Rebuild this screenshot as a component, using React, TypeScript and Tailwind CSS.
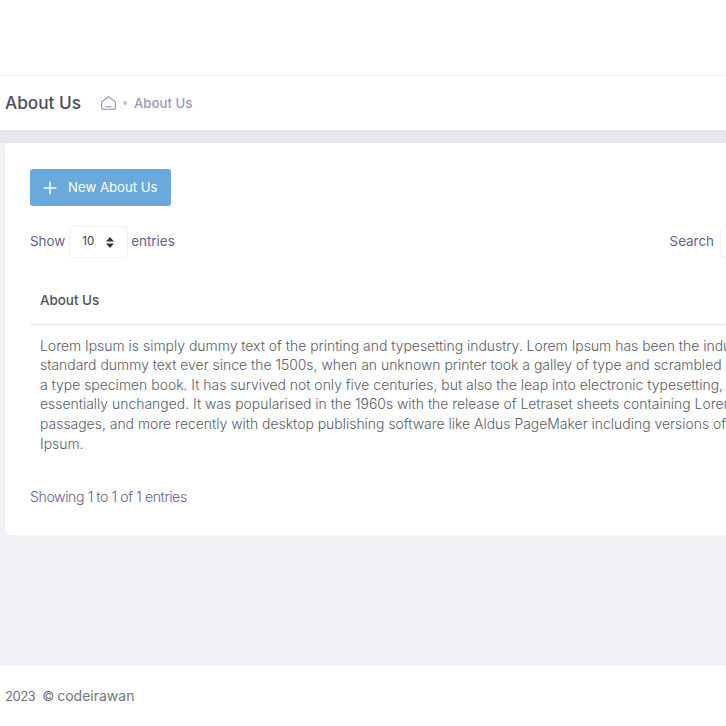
import { Plus } from "lucide-react";

const font = "font-['Inter','Noto_Sans',sans-serif]";

const loremLines = [
  "Lorem Ipsum is simply dummy text of the printing and typesetting industry. Lorem Ipsum has been the industry's",
  "standard dummy text ever since the 1500s, when an unknown printer took a galley of type and scrambled it to make",
  "a type specimen book. It has survived not only five centuries, but also the leap into electronic typesetting, remaining",
  "essentially unchanged. It was popularised in the 1960s with the release of Letraset sheets containing Lorem Ipsum",
  "passages, and more recently with desktop publishing software like Aldus PageMaker including versions of Lorem",
  "Ipsum.",
];

function HomeIcon() {
  return (
    <svg width="15" height="14" viewBox="0 0 15 14" fill="none" stroke="#8f90a9" strokeWidth="1.1" aria-hidden>
      <path d="M.7 5.6 7.5.8l6.8 4.8v6.8a.9.9 0 0 1-.9.9H1.6a.9.9 0 0 1-.9-.9z" strokeLinejoin="round" />
      <path d="M5 10.8h5" strokeLinecap="round" />
    </svg>
  );
}

function SortIcon() {
  return (
    <svg width="8" height="11" viewBox="0 0 8 11" fill="#33343f" aria-hidden>
      <path d="M4 0 8 4.5H0zM4 11 0 6.5h8z" />
    </svg>
  );
}

export default function App() {
  return (
    <div className={`flex h-[726px] w-[726px] flex-col overflow-hidden bg-[#f0f1f5] ${font}`}>
      <div className="h-[76px] shrink-0 border-b border-[#f1f2f4] bg-white" />

      <div className="flex h-[54px] shrink-0 items-center bg-white pl-[5px]">
        <h1 className="w-[96px] text-[17.2px] font-medium text-[#4b4d5c]">About Us</h1>
        <div className="flex items-center pt-[1px] text-[13.2px] text-[#9a9bb3]">
          <HomeIcon />
          <span className="mx-[7px] h-1 w-1 rounded-full bg-[#c5c6d6]" />
          <span className="font-medium">About Us</span>
        </div>
      </div>

      <div className="h-[13px] shrink-0 bg-[#e6e7eb]" />

      <div className="ml-[5px] h-[392px] w-[900px] shrink-0 rounded-[5px] bg-white px-[25px] pt-[26px]">
        <button className="flex h-[37px] w-[141px] items-center rounded-[3px] bg-[#6aa9dc] pl-[10px] text-[13.2px] text-white">
          <Plus size={20} strokeWidth={1.8} className="mr-[8px]" />
          New About Us
        </button>

        <div className="mt-[20px] flex w-[790px] items-center justify-between text-[13.4px] text-[#5f6192]">
          <div className="flex items-center">
            <span className="mb-[2px]">Show</span>
            <div className="ml-[4px] mr-[3px] flex h-[32px] w-[59px] items-center justify-between rounded-[5px] border border-[#eff0f3] bg-white pl-[12px] pr-[13px] text-[11.5px] text-[#3d3e4c]">
              10
              <SortIcon />
            </div>
            <span className="mb-[2px]">entries</span>
          </div>
          <div className="flex items-center">
            <span className="mb-[2px]">Search</span>
            <div className="ml-[6px] h-[32px] w-[100px] shrink-0 rounded-[5px] border border-[#eff0f3] bg-white" />
          </div>
        </div>

        <div className="mt-[12px] flex h-[55px] items-center border-b border-[#e4e5e9] pl-[10px] pt-[6px]">
          <span className="text-[13.4px] font-medium text-[#4e505e]">About Us</span>
        </div>

        <div className="pl-[10px] pt-[10.6px] text-[13.95px] font-light leading-[19.6px] text-[#5a5c68]">
          {loremLines.map((line) => (
            <p key={line} className="whitespace-nowrap">
              {line}
            </p>
          ))}
        </div>

        <p className="mt-[32.4px] text-[14.1px] font-light tracking-[-0.4px] text-[#5f6192]">Showing 1 to 1 of 1 entries</p>
      </div>

      <div className="mt-[130px] flex flex-1 items-baseline border-t border-[#eef0f3] bg-white pl-[5px] pt-[19px] text-[13.2px] text-[#73747f]">
        <span className="tracking-[-0.6px]">2023</span>
        <span className="ml-[7px]">©</span>
        <span className="ml-[3px] text-[14px]">codeirawan</span>
      </div>
    </div>
  );
}
